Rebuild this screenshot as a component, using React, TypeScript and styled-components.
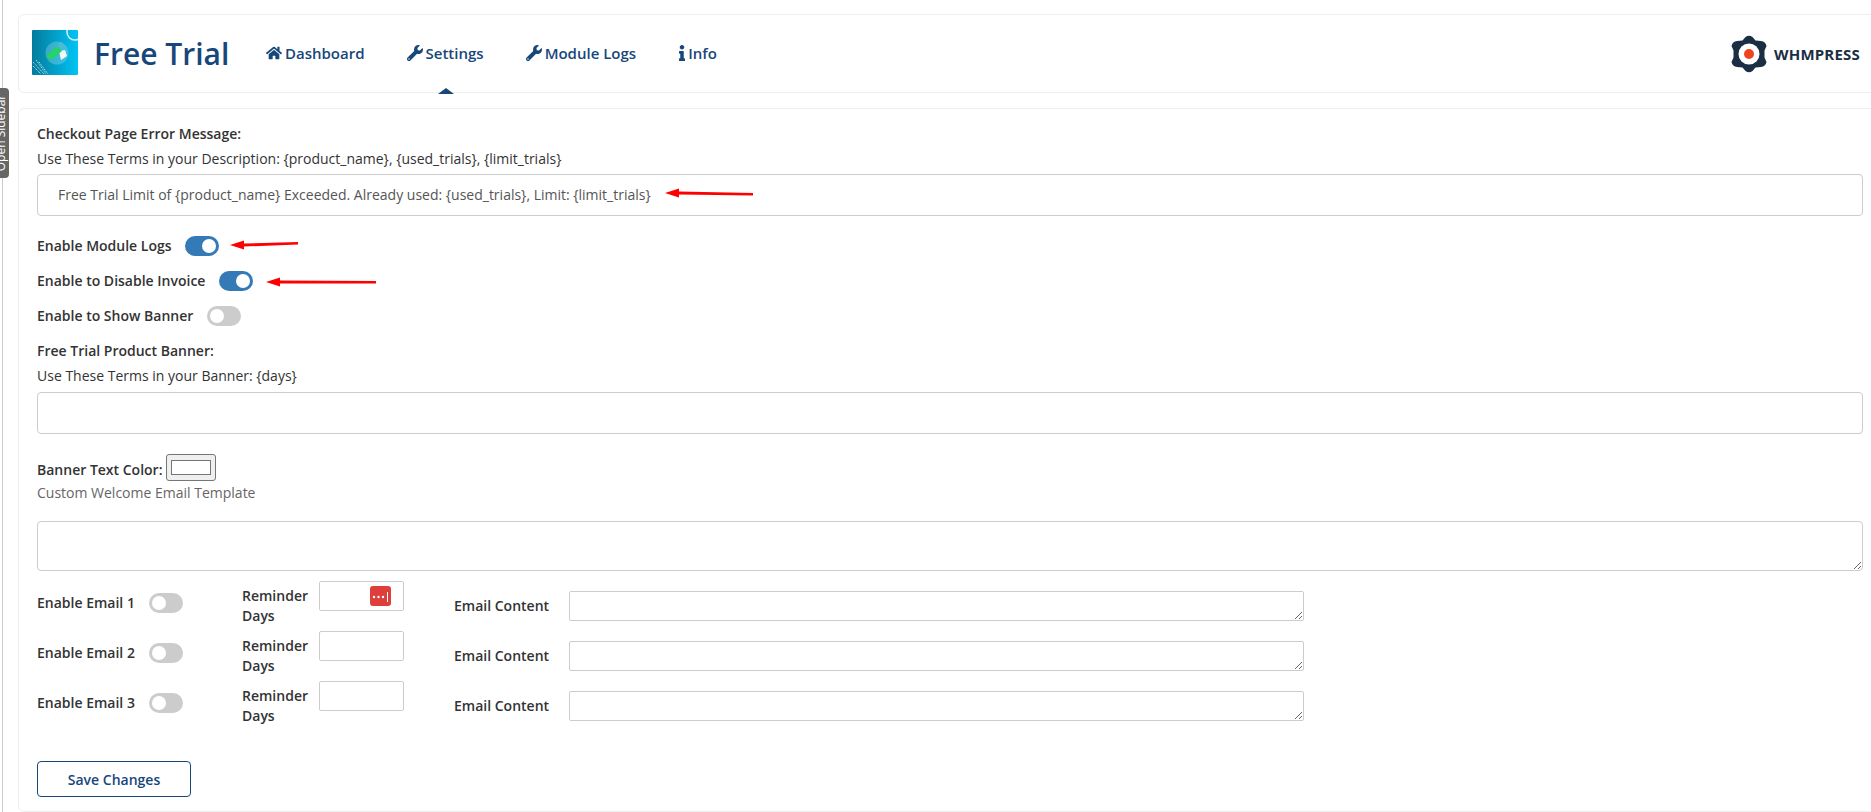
import React from 'react';
import styled, {createGlobalStyle} from 'styled-components';
import {FaHome, FaWrench, FaInfo} from 'react-icons/fa';

const GlobalStyle = createGlobalStyle`
  html, body {
    margin: 0;
    padding: 0;
    background: #fff;
    overflow: hidden;
  }
  body {
    font-family: "Open Sans", "Noto Sans", sans-serif;
    font-size: 14px;
    line-height: 20px;
    color: #333;
  }
`

const Page = styled.div`
  position: relative;
  width: 1871px;
  height: 812px;
  box-sizing: border-box;
  padding: 14px 0 0 18px;
  overflow: hidden;

  &::before {
    content: "";
    position: absolute;
    left: 2px;
    top: 0;
    bottom: 0;
    width: 1px;
    background: #ccc;
  }
`

const SidebarTab = styled.div`
  position: absolute;
  left: -46px;
  top: 123px;
  box-sizing: border-box;
  width: 90px;
  height: 20px;
  padding-top: 2px;
  line-height: 20px;
  background: #666;
  color: #fff;
  font-size: 12px;
  text-align: center;
  white-space: nowrap;
  border-radius: 0 0 4px 4px;
  transform: rotate(-90deg);
`

const Card = styled.div`
  box-sizing: border-box;
  width: 1870px;
  border: 1px solid #eee;
  border-radius: 6px;
  background: #fff;
`

const Header = styled(Card)`
  position: relative;
  height: 79px;
  display: flex;
  align-items: center;
  padding-left: 13px;
`

const LogoBox = styled.svg`
  width: 46px;
  height: 45px;
  flex: none;
  margin-top: -2px;
`

const Title = styled.div`
  margin-left: 16px;
  width: 172px;
  font-size: 30px;
  line-height: 38px;
  font-weight: 600;
  color: #17477a;
  white-space: nowrap;
`

const Nav = styled.nav`
  display: flex;
  align-items: center;
  gap: 42px;
  margin-top: -2px;
`

const NavItem = styled.a<{$active?: boolean}>`
  position: relative;
  display: flex;
  align-items: center;
  gap: 3px;
  font-size: 15px;
  font-weight: 600;
  color: #17477a;
  white-space: nowrap;

  svg {
    width: auto;
    height: 16px;
  }

  ${p => p.$active && `
    &::after {
      content: "";
      position: absolute;
      left: 31px;
      top: 45px;
      border-left: 8px solid transparent;
      border-right: 8px solid transparent;
      border-bottom: 6px solid #17477a;
    }
  `}
`

const InfoIcon = styled(FaInfo)`
  margin: 0 -5px 0 -4px;
`

const Brand = styled.div`
  position: absolute;
  left: 1712px;
  top: 20px;
  display: flex;
  align-items: center;
  gap: 7px;
  font-size: 15px;
  font-weight: 700;
  color: #1b2e44;
  letter-spacing: 0.2px;
`

const Body = styled(Card)`
  margin-top: 15px;
  height: 704px;
  padding: 15px 0 0 18px;
`

const Label = styled.div`
  font-weight: 600;
  white-space: nowrap;
`

const Hint = styled.div<{$muted?: boolean}>`
  margin-top: ${p => (p.$muted ? '2px' : '5px')};
  white-space: nowrap;
  color: ${p => (p.$muted ? '#666' : '#333')};
`

const BannerHeading = styled(Label)`
  margin-top: 15px;
`

const TextInput = styled.div<{$top: number}>`
  box-sizing: border-box;
  width: 1826px;
  height: 42px;
  margin-top: ${p => p.$top}px;
  padding: 0 20px;
  line-height: 40px;
  color: #555;
  border: 1px solid #ccc;
  border-radius: 4px;
  white-space: nowrap;
`

const ToggleRow = styled.div<{$top: number; $gap?: number}>`
  display: flex;
  align-items: center;
  gap: ${p => p.$gap ?? 13}px;
  height: 20px;
  margin-top: ${p => p.$top}px;
`

const Toggle = styled.span<{$on?: boolean}>`
  position: relative;
  flex: none;
  width: 34px;
  height: 20px;
  border-radius: 10px;
  background: ${p => (p.$on ? '#337ab7' : '#ccc')};

  &::after {
    content: "";
    position: absolute;
    top: 3px;
    left: ${p => (p.$on ? '17px' : '3px')};
    width: 14px;
    height: 14px;
    border-radius: 50%;
    background: #fff;
  }
`

const ColorRow = styled.div`
  display: flex;
  align-items: flex-end;
  gap: 3px;
  margin-top: 20px;
  height: 27px;
`

const ColorLabel = styled(Label)`
  line-height: 22px;
`

const ColorSwatch = styled.div`
  box-sizing: border-box;
  width: 50px;
  height: 27px;
  padding: 5px 4px;
  background: #efefef;
  border: 1px solid #767676;
  border-radius: 3px;

  &::after {
    content: "";
    display: block;
    box-sizing: border-box;
    height: 15px;
    background: #fff;
    border: 1px solid #767676;
  }
`

const BigArea = styled.textarea`
  display: block;
  box-sizing: border-box;
  width: 1826px;
  height: 50px;
  margin: 18px 0 0;
  padding: 6px 12px;
  border: 1px solid #ccc;
  border-radius: 4px;
  outline: none;
`

const EmailList = styled.div`
  margin-top: 10px;
`

const EmailRow = styled.div`
  display: grid;
  grid-template-columns: 205px 77px 135px 115px 735px;
  height: 50px;
`

const EmailToggle = styled.div`
  display: flex;
  align-items: center;
  justify-content: space-between;
  width: 146px;
  height: 20px;
  margin-top: 12px;
  white-space: nowrap;
  font-weight: 600;
`

const ReminderLabel = styled.div`
  margin-top: 5px;
  font-weight: 600;
`

const ReminderInput = styled.div`
  position: relative;
  box-sizing: border-box;
  width: 85px;
  height: 30px;
  border: 1px solid #ccc;
  border-radius: 2px;
`

const PassBadge = styled.svg`
  position: absolute;
  left: 50px;
  top: 4px;
  width: 21px;
  height: 20px;
`

const ContentLabel = styled.div`
  margin-top: 15px;
  font-weight: 600;
  white-space: nowrap;
`

const RowArea = styled.textarea`
  display: block;
  box-sizing: border-box;
  width: 735px;
  height: 30px;
  margin: 10px 0 0;
  border: 1px solid #ccc;
  border-radius: 2px;
  outline: none;
`

const SaveButton = styled.button`
  display: block;
  box-sizing: border-box;
  width: 154px;
  height: 36px;
  margin-top: 30px;
  background: #fff;
  border: 1px solid #17477a;
  border-radius: 4px;
  color: #17477a;
  font-family: inherit;
  font-size: 14px;
  font-weight: 600;
`

const Arrow = styled.svg<{$left: number; $top: number}>`
  position: absolute;
  left: ${p => p.$left}px;
  top: ${p => p.$top}px;
`

function AppLogo() {
    return (
        <LogoBox viewBox="0 0 46 45">
            <defs>
                <linearGradient id="logoBg" x1="0" y1="0" x2="1" y2="0">
                    <stop offset="0" stopColor="#047b9c"/>
                    <stop offset="1" stopColor="#01c4f5"/>
                </linearGradient>
            </defs>
            <rect width="46" height="45" rx="1" fill="url(#logoBg)"/>
            <circle cx="43" cy="2" r="8" fill="none" stroke="#d8f4fb" strokeWidth="1.5"/>
            <circle cx="25" cy="23" r="11.5" fill="#ffffff" fillOpacity="0.22"/>
            <path d="M27 21l6-1 2 6-6 4z" fill="#f4f7f5"/>
            <path d="M14 26l11-10 5 5-11 9z" fill="#25d366"/>
            <circle cx="29" cy="15" r="2" fill="none" stroke="#6fb7c4" strokeWidth="1"/>
            <path d="M1 32l11 12M1 36l8 8M4 30l10 14M7 32l9 12" stroke="#d5eef2" strokeWidth="0.9" strokeDasharray="1.2 1"/>
        </LogoBox>
    );
}

function GearLogo() {
    return (
        <svg width="36" height="38" viewBox="0 0 36 38">
            <path d="M14.5 2Q18-.5 21.5 2L24.5 5.5 30 6Q34.5 6.5 35.5 11L33.5 15.5V22.5L35.5 27Q34.5 31.5 30 32L24.5 32.5 21.5 36Q18 38.5 14.5 36L11.5 32.5 6 32Q1.5 31.5.5 27L2.5 22.5V15.5L.5 11Q1.5 6.5 6 6L11.5 5.5Z" fill="#1b2e44"/>
            <circle cx="18" cy="19" r="10.5" fill="#fff"/>
            <circle cx="18" cy="19" r="5" fill="#f0441f"/>
        </svg>
    );
}

function RedArrow({left, top, width, tilt = 0}: {left: number; top: number; width: number; tilt?: number}) {
    return (
        <Arrow $left={left} $top={top} width={width} height={12} viewBox={`0 0 ${width} 12`}>
            <path d={`M14 4.5 L${width} ${5 + tilt} L${width} ${7.5 + tilt} L14 7.5 L14 10.5 L0 6 L14 1.5 Z`} fill="#f00"/>
        </Arrow>
    );
}

function EmailLine({n, badge}: {n: number; badge?: boolean}) {
    return (
        <EmailRow>
            <EmailToggle>Enable Email {n}<Toggle/></EmailToggle>
            <ReminderLabel>Reminder Days</ReminderLabel>
            <ReminderInput>
                {badge && (
                    <PassBadge viewBox="0 0 21 20">
                        <rect width="21" height="20" rx="3" fill="#dc3f3c"/>
                        <circle cx="4" cy="11" r="1.2" fill="#fff"/>
                        <circle cx="8.5" cy="11" r="1.2" fill="#fff"/>
                        <circle cx="13" cy="11" r="1.2" fill="#fff"/>
                        <rect x="17" y="6" width="1" height="10" fill="#fff"/>
                    </PassBadge>
                )}
            </ReminderInput>
            <ContentLabel>Email Content</ContentLabel>
            <RowArea/>
        </EmailRow>
    );
}

function App() {
    return (
        <Page>
            <GlobalStyle/>
            <SidebarTab>Open Sidebar</SidebarTab>
            <Header>
                <AppLogo/>
                <Title>Free Trial</Title>
                <Nav>
                    <NavItem><FaHome/>Dashboard</NavItem>
                    <NavItem $active><FaWrench/>Settings</NavItem>
                    <NavItem><FaWrench/>Module Logs</NavItem>
                    <NavItem><InfoIcon/>Info</NavItem>
                </Nav>
                <Brand><GearLogo/>WHMPRESS</Brand>
            </Header>
            <Body>
                <Label>Checkout Page Error Message:</Label>
                <Hint>Use These Terms in your Description: {'{product_name}'}, {'{used_trials}'}, {'{limit_trials}'}</Hint>
                <TextInput $top={5}>Free Trial Limit of {'{product_name}'} Exceeded. Already used: {'{used_trials}'}, Limit: {'{limit_trials}'}</TextInput>
                <ToggleRow $top={20}><Label>Enable Module Logs</Label><Toggle $on/></ToggleRow>
                <ToggleRow $top={15} $gap={14}><Label>Enable to Disable Invoice</Label><Toggle $on/></ToggleRow>
                <ToggleRow $top={15} $gap={14}><Label>Enable to Show Banner</Label><Toggle/></ToggleRow>
                <BannerHeading>Free Trial Product Banner:</BannerHeading>
                <Hint>Use These Terms in your Banner: {'{days}'}</Hint>
                <TextInput $top={6}/>
                <ColorRow><ColorLabel>Banner Text Color:</ColorLabel><ColorSwatch/></ColorRow>
                <Hint $muted>Custom Welcome Email Template</Hint>
                <BigArea/>
                <EmailList>
                    <EmailLine n={1} badge/>
                    <EmailLine n={2}/>
                    <EmailLine n={3}/>
                </EmailList>
                <SaveButton>Save Changes</SaveButton>
            </Body>
            <RedArrow left={665} top={187} width={88} tilt={1}/>
            <RedArrow left={230} top={239} width={68} tilt={-2}/>
            <RedArrow left={266} top={276} width={110}/>
        </Page>
    );
}

export default App;
